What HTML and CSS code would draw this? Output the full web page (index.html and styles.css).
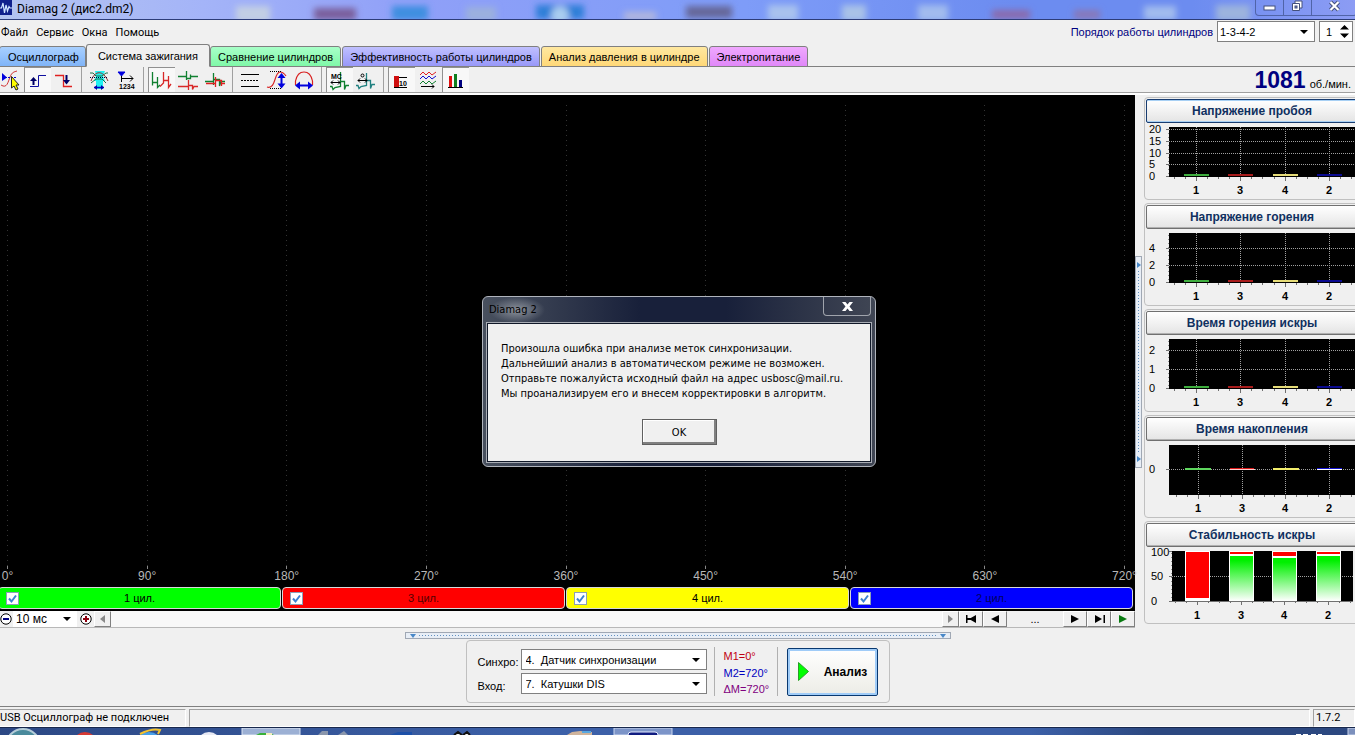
FILE: index.html
```html
<!DOCTYPE html>
<html lang="ru">
<head>
<meta charset="utf-8">
<title>Diamag 2 (дис2.dm2)</title>
<link rel="stylesheet" href="styles.css">
</head>
<body>
<svg class="defs" aria-hidden="true">
  <defs>
    <linearGradient id="good" x1="0" y1="0" x2="0" y2="1"><stop offset="0.1" stop-color="#00f000"/><stop offset="1" stop-color="#fff"/></linearGradient>
    <filter id="soft" x="-20%" y="-60%" width="140%" height="220%"><feGaussianBlur stdDeviation="3"/></filter>
    <symbol id="axis" overflow="visible">
      <rect x="23" y="3" width="190" height="50" fill="#000"/>
      <path d="M50.500 3V53M94.500 3V53M139.500 3V53M183.500 3V53" class="grid"/>
      <path d="M20 52.500H23M50.500 53V57M94.500 53V57M139.500 53V57M183.500 53V57M28.500 53V55M39.500 53V55M61.500 53V55M72.500 53V55M83.500 53V55M105.500 53V55M116.500 53V55M128.500 53V55M150.500 53V55M161.500 53V55M172.500 53V55M194.500 53V55M205.500 53V55" class="tick"/>
      <path d="M22.500 5V53" class="minor"/>
      <rect x="38" y="50" width="25" height="2" fill="#3fae3f"/>
      <rect x="82" y="50" width="25" height="2" fill="#a81c1c"/>
      <rect x="127" y="50" width="25" height="2" fill="#e6dc78"/>
      <rect x="171" y="50" width="25" height="2" fill="#0a0a90"/>
      <g class="cat"><text x="50" y="70">1</text><text x="94" y="70">3</text><text x="139" y="70">4</text><text x="183" y="70">2</text></g>
    </symbol>
    <symbol id="check" viewBox="0 0 13 13"><path d="M3 6.500L5.500 9.500L10 3.500" fill="none" stroke="#3c82d2" stroke-width="2"/></symbol>
  </defs>
</svg>

<header class="titlebar">
  <svg class="blobs" width="100%" height="19" aria-hidden="true">
    <g filter="url(#soft)">
      <rect x="236" y="6" width="34" height="16" fill="#c3cfe4"/>
      <rect x="314" y="8" width="42" height="12" fill="#7a5f9c"/>
      <rect x="392" y="6" width="36" height="14" fill="#3c8fe0"/>
      <rect x="466" y="7" width="30" height="14" fill="#9bb0de"/>
      <rect x="536" y="5" width="48" height="14" fill="#2f7fd8"/>
      <circle cx="560" cy="15" r="9" fill="#a9cdf0"/>
      <rect x="624" y="12" width="32" height="8" fill="#b4b8dc"/>
      <rect x="686" y="6" width="46" height="12" fill="#66689a"/>
      <rect x="768" y="5" width="30" height="16" fill="#a9c2ee"/>
      <rect x="842" y="5" width="24" height="16" fill="#a9c2e8"/>
      <rect x="918" y="5" width="30" height="16" fill="#a2bcee"/>
      <rect x="992" y="10" width="38" height="9" fill="#8a6aac"/>
      <rect x="1074" y="10" width="26" height="9" fill="#8878b8"/>
      <rect x="1144" y="6" width="32" height="14" fill="#a2bcee"/>
      <rect x="1216" y="5" width="34" height="16" fill="#9cb4de"/>
    </g>
  </svg>
  <svg width="12" height="16" viewBox="0 0 12 16" class="appicon" aria-hidden="true"><rect width="12" height="15" fill="#10208c"/><path d="M0 8H1.500L3 3L4.500 13L6 5L7.500 11L9 6.500L10 8H12" fill="none" stroke="#cfe4ff" stroke-width="1.200"/></svg>
  <h1 class="title">Diamag 2 (дис2.dm2)</h1>
  <div class="winbtns">
    <button aria-label="Свернуть"><svg width="13" height="12" viewBox="0 0 13 12"><rect x="1" y="6" width="11" height="4" fill="#fff" stroke="#44507c"/></svg></button>
    <button aria-label="Восстановить"><svg width="13" height="12" viewBox="0 0 13 12"><path d="M4 1H11V8H4Z" fill="#fff" stroke="#44507c"/><path d="M1.500 3.500H8.500V10.500H1.500Z" fill="#fff" stroke="#44507c"/><rect x="4" y="6" width="2" height="2" fill="#6c86cc" stroke="#44507c"/></svg></button>
    <button aria-label="Закрыть" class="wide"><svg width="13" height="12" viewBox="0 0 13 12"><path d="M2.500 2L10.500 10M10.500 2L2.500 10" stroke="#44507c" stroke-width="4"/><path d="M2.500 2L10.500 10M10.500 2L2.500 10" stroke="#fff" stroke-width="2.200"/></svg></button>
  </div>
</header>

<div class="top">
  <div class="topleft">
    <nav class="menu"><button>Файл</button><button>Сервис</button><button>Окна</button><button>Помощь</button></nav>
    <div class="tabs" role="tablist">
      <button role="tab" class="tab t1">Осциллограф</button>
      <button role="tab" class="tab active" aria-selected="true">Система зажигания</button>
      <button role="tab" class="tab t3">Сравнение цилиндров</button>
      <button role="tab" class="tab t4">Эффективность работы цилиндров</button>
      <button role="tab" class="tab t5">Анализ давления в цилиндре</button>
      <button role="tab" class="tab t6">Электропитание</button>
    </div>
  </div>
  <div class="order">
    <label for="order">Порядок работы цилиндров</label>
    <span class="combo orderbox"><select id="order"><option>1-3-4-2</option></select></span>
    <span class="spin"><input aria-label="Номер цилиндра" value="1"><svg width="9" height="13" viewBox="0 0 9 13" aria-hidden="true"><path d="M0 4.500L4.500 0L9 4.500ZM0 8.500H9L4.500 13Z"/></svg></span>
  </div>
</div>

<div class="toolbar">
  <button class="tb first" aria-label="Маркер"><svg width="24" height="24" viewBox="0 0 24 24"><path d="M1 17C7 21 8 14 10 9S14 4 17 3" fill="none" stroke="#d03030"/><path d="M5 9.500H17" stroke="#00c" stroke-dasharray="2 1"/><path d="M2 5L7 9.500L2 13Z" fill="#00d"/><path d="M11.500 8.500V20L14 18L16 22L18 21L16 17H19Z" fill="#ff0" stroke="#222"/></svg></button>
  <button class="tb on" aria-label="Фронт"><svg width="26" height="24" viewBox="0 0 26 24"><path d="M6 18.500H14.500V7.500H22" fill="none" stroke="#1010a0"/><path d="M9.500 17V11" stroke="#006" stroke-width="2"/><path d="M6 13L9.500 9L13 13Z" fill="#006"/></svg></button>
  <button class="tb" aria-label="Спад"><svg width="26" height="24" viewBox="0 0 26 24"><path d="M4 7.500H12.500V18.500H21" fill="none" stroke="#e02020" stroke-width="1.300"/><path d="M15.500 7V14" stroke="#006" stroke-width="2"/><path d="M12 12L15.500 16.500L19 12Z" fill="#006"/></svg></button>
  <i class="sep"></i>
  <button class="tb" aria-label="Диапазон"><svg width="26" height="24" viewBox="0 0 26 24"><path d="M9 3H19L17 8L19 13H17V21H10V13H8L10 8Z" fill="#20f0f0"/><path d="M4 5H7L10 8H16L20 5H22M5 15L10 11H16L20 15" fill="none" stroke="#187048"/><path d="M5 13C9 2 17 2 22 13" fill="none" stroke="#903030"/><path d="M4 9.500H22" stroke="#003" stroke-dasharray="1 1"/><path d="M8 19.500H18" stroke="#00c" stroke-width="1.500"/><path d="M8 19.500L11 17V22ZM18 19.500L15 17V22Z" fill="#00a"/></svg></button>
  <button class="tb" aria-label="Нумерация"><svg width="26" height="24" viewBox="0 0 26 24"><path d="M5 4H12L8.500 8Z" fill="#00d" stroke="#00d"/><path d="M8.500 8V14M8 10.500H20M17 7.500L20 10.500L17 13.500" fill="none" stroke="#000"/><text x="6" y="21" class="num">1234</text></svg></button>
  <i class="sep"></i>
  <button class="tb on" aria-label="Последовательно"><svg width="26" height="24" viewBox="0 0 26 24"><path d="M4.500 17.500V4M4.500 14.500H9.500M9.500 9V19.500L12 17" fill="none" stroke="#108030" stroke-width="1.300"/><path d="M12 18.500L15.500 15V4V12.500H20.500M20.500 8V19.500L23 16" fill="none" stroke="#d82828" stroke-width="1.300"/></svg></button>
  <button class="tb" aria-label="Раздельно"><svg width="26" height="24" viewBox="0 0 26 24"><path d="M3 8.500H11.500M11.500 3V12M11.500 10.500H15.500V6.500M15.500 8.500H23" fill="none" stroke="#108030" stroke-width="1.300"/><path d="M3 18.500H13.500M13.500 12V22M13.500 17.500H17.500V21.500L19 18.500H23" fill="none" stroke="#d82828" stroke-width="1.300"/></svg></button>
  <button class="tb" aria-label="Наложение"><svg width="26" height="24" viewBox="0 0 26 24"><path d="M3 13.500H11.500M11.500 5V17M11.500 11.500H17.500V18L19 13.500H23" fill="none" stroke="#108030" stroke-width="1.300"/><path d="M4 15.500H13.500M13.500 9V19M13.500 12.500H19.500V18M19.500 15.500H23" fill="none" stroke="#e02020" stroke-width="1.300"/></svg></button>
  <i class="sep"></i>
  <button class="tb" aria-label="Линии"><svg width="26" height="24" viewBox="0 0 26 24"><path d="M4 6.500H22M4 18.500H22" stroke="#000"/><path d="M4 12.500H22" stroke="#000" stroke-dasharray="2 1"/></svg></button>
  <button class="tb" aria-label="Амплитуда"><svg width="26" height="24" viewBox="0 0 26 24"><path d="M3 19C12 22 10 4 16 4C19 4 20 5 22 8" fill="none" stroke="#d82020" stroke-width="1.200"/><path d="M6 3.500H18M6 20.500H18" stroke="#000" stroke-dasharray="1 1"/><path d="M17.500 8V17" stroke="#00d" stroke-width="2"/><path d="M13.500 10L17.500 5L21.500 10ZM13.500 15.500L17.500 20.500L21.500 15.500Z" fill="#00d"/></svg></button>
  <button class="tb" aria-label="Длительность"><svg width="26" height="24" viewBox="0 0 26 24"><path d="M4.500 17V13C7 1 19 1 21.500 13V17" fill="none" stroke="#d82020" stroke-width="1.200"/><path d="M8 17.500H18" stroke="#00d" stroke-width="2"/><path d="M9 13.500L4 17.500L9 21.500ZM17 13.500L22 17.500L17 21.500Z" fill="#00d"/></svg></button>
  <i class="sep"></i>
  <button class="tb on" aria-label="Миллисекунды"><svg width="26" height="24" viewBox="0 0 26 24"><path d="M4 18.500H6L7 21.500L9 19.500L14.500 18.500V4V13.500H18.500V21.500L20 17.500H23" fill="none" stroke="#108030" stroke-width="1.300"/><text x="5" y="11" class="num">MC</text><path d="M5 14.500H14M7 12.500L5 14.500L7 16.500M12 12.500L14 14.500L12 16.500" fill="none" stroke="#000"/></svg></button>
  <button class="tb" aria-label="Градусы"><svg width="26" height="24" viewBox="0 0 26 24"><path d="M3 17.500H5L6 20.500L8 18.500L13.500 17.500V5V12.500H17.500V20.500L19 16.500H22" fill="none" stroke="#208080" stroke-width="1.300"/><circle cx="9.500" cy="7.500" r="1.500" fill="none" stroke="#000"/><path d="M5 12.500H14M7 10.500L5 12.500L7 14.500M12 10.500L14 12.500L12 14.500" fill="none" stroke="#000"/></svg></button>
  <i class="sep"></i>
  <button class="tb on" aria-label="Значения"><svg width="26" height="24" viewBox="0 0 26 24"><rect x="6" y="8" width="5" height="11" fill="#d01010"/><path d="M6 19.500H19M11 9.500H19" stroke="#000"/><text x="11" y="18" class="num">10</text></svg></button>
  <button class="tb" aria-label="Тренды"><svg width="26" height="24" viewBox="0 0 26 24"><g fill="none"><path d="M5 7L8 4L11 7L14 4L17 7L21 4" stroke="#e02020"/><path d="M5 11L8 8L11 11L14 8L17 11L21 8" stroke="#1010d0"/><path d="M5 16L8 13L11 16L14 13L17 16L21 13" stroke="#108030"/><path d="M6 18.500H19M17 16.500L19 18.500L17 20.500" stroke="#000"/></g></svg></button>
  <button class="tb on" aria-label="Гистограммы"><svg width="26" height="24" viewBox="0 0 26 24"><rect x="7" y="8" width="3" height="11" fill="#e01010"/><rect x="12" y="6" width="3" height="13" fill="#108020"/><rect x="17" y="12" width="3" height="7" fill="#000080"/><path d="M6 19.500H21" stroke="#000"/></svg></button>
  <div class="rpm"><strong>1081</strong><span>об./мин.</span></div>
</div>

<main class="main">
  <section class="scope">
    <div class="plot">
      <div class="mark"><i></i><span>0°</span></div><div class="mark"><i></i><span>90°</span></div><div class="mark"><i></i><span>180°</span></div><div class="mark"><i></i><span>270°</span></div><div class="mark"><i></i><span>360°</span></div><div class="mark"><i></i><span>450°</span></div><div class="mark"><i></i><span>540°</span></div><div class="mark"><i></i><span>630°</span></div><div class="mark"><i></i><span>720°</span></div>
    </div>
    <div class="cyls">
      <label class="cyl c1"><input type="checkbox" checked><svg class="tick-ico" width="13" height="13"><use href="#check"/></svg><span>1 цил.</span></label>
      <label class="cyl c3"><input type="checkbox" checked><svg class="tick-ico" width="13" height="13"><use href="#check"/></svg><span>3 цил.</span></label>
      <label class="cyl c4"><input type="checkbox" checked><svg class="tick-ico" width="13" height="13"><use href="#check"/></svg><span>4 цил.</span></label>
      <label class="cyl c2"><input type="checkbox" checked><svg class="tick-ico" width="13" height="13"><use href="#check"/></svg><span>2 цил.</span></label>
    </div>
    <div class="scroll">
      <button class="zoomout" aria-label="Уменьшить"><svg width="12" height="12" viewBox="0 0 12 12"><circle cx="6" cy="6" r="5.200" fill="#fff" stroke="#000"/><path d="M3 6H9" stroke="#000080" stroke-width="2"/></svg></button>
      <span class="combo timebox"><select aria-label="Развёртка"><option>10 мс</option></select></span>
      <button class="zoomin" aria-label="Увеличить"><svg width="12" height="12" viewBox="0 0 12 12"><circle cx="6" cy="6" r="5.200" fill="#fff" stroke="#000"/><path d="M3 6H9M6 3V9" stroke="#900010" stroke-width="2"/></svg></button>
      <button class="raised arrow" aria-label="Влево"><svg width="5" height="8" viewBox="0 0 5 8"><path d="M5 0V8L0 4Z" fill="#888"/></svg></button>
      <div class="track"></div>
      <button class="raised arrow" aria-label="Вправо"><svg width="5" height="8" viewBox="0 0 5 8"><path d="M0 0V8L5 4Z" fill="#888"/></svg></button>
      <button class="raised nav" aria-label="В начало"><svg width="11" height="8" viewBox="0 0 11 8"><path d="M0 0H1.500V8H0ZM10 0V8L3 4ZM1 3H5V5H1Z"/></svg></button>
      <button class="raised nav" aria-label="Назад"><svg width="8" height="8" viewBox="0 0 8 8"><path d="M8 0V8L0 4Z"/></svg></button>
      <button class="dots">...</button>
      <button class="raised nav" aria-label="Вперёд"><svg width="8" height="8" viewBox="0 0 8 8"><path d="M0 0V8L8 4Z"/></svg></button>
      <button class="raised nav" aria-label="В конец"><svg width="11" height="8" viewBox="0 0 11 8"><path d="M9.500 0H11V8H9.500ZM1 0V8L8 4Z"/></svg></button>
      <button class="raised nav" aria-label="Пуск"><svg width="8" height="8" viewBox="0 0 8 8"><path d="M0 0V8L8 4Z" fill="#087a10"/></svg></button>
    </div>
  </section>

  <div class="vsplit"><svg width="4" height="6" viewBox="0 0 4 6"><path d="M0 0V6L4 3Z"/></svg><i></i><svg width="4" height="6" viewBox="0 0 4 6"><path d="M0 0V6L4 3Z"/></svg></div>

  <aside class="side">
    <section class="panel"><button class="head focus">Напряжение пробоя</button>
      <svg class="chart" height="74"><use href="#axis"/><path d="M23 5.500H213M23 17.500H213M23 29.500H213M23 40.500H213" class="grid"/><path d="M20 5.500H23M20 17.500H23M20 29.500H23M20 40.500H23" class="tick"/><g class="val"><text x="3" y="9">20</text><text x="3" y="21">15</text><text x="3" y="33">10</text><text x="3" y="44">5</text><text x="3" y="56">0</text></g></svg></section>
    <section class="panel"><button class="head">Напряжение горения</button>
      <svg class="chart" height="74"><use href="#axis"/><path d="M23 18.500H213M23 35.500H213" class="grid"/><path d="M20 18.500H23M20 35.500H23" class="tick"/><g class="val"><text x="3" y="22">4</text><text x="3" y="39">2</text><text x="3" y="56">0</text></g></svg></section>
    <section class="panel"><button class="head">Время горения искры</button>
      <svg class="chart" height="74"><use href="#axis"/><path d="M23 14.500H213M23 33.500H213" class="grid"/><path d="M20 14.500H23M20 33.500H23" class="tick"/><g class="val"><text x="3" y="18">2</text><text x="3" y="37">1</text><text x="3" y="56">0</text></g></svg></section>
    <section class="panel"><button class="head">Время накопления</button>
      <svg class="chart" height="74"><rect x="23" y="3" width="190" height="50" fill="#000"/><path d="M52.500 3V53M96.500 3V53M139.500 3V53M183.500 3V53M23 27.500H213" class="grid"/><path d="M20 27.500H23M52.500 53V57M96.500 53V57M139.500 53V57M183.500 53V57M30.500 53V55M41.500 53V55M63.500 53V55M74.500 53V55M85.500 53V55M107.500 53V55M118.500 53V55M128.500 53V55M150.500 53V55M161.500 53V55M172.500 53V55M194.500 53V55M205.500 53V55" class="tick"/>
      <rect x="39" y="26" width="26" height="2" fill="#5ed65e"/><rect x="84" y="26" width="24" height="1" fill="#d81818"/><rect x="84" y="27" width="25" height="1" fill="#fcc"/><rect x="127" y="26" width="26" height="2" fill="#f2ee6c"/><rect x="171" y="26" width="25" height="1" fill="#1414d0"/><rect x="171" y="27" width="25" height="1" fill="#fff"/>
      <g class="val"><text x="3" y="31">0</text></g><g class="cat"><text x="52" y="70">1</text><text x="96" y="70">3</text><text x="139" y="70">4</text><text x="183" y="70">2</text></g></svg></section>
    <section class="panel"><button class="head">Стабильность искры</button>
      <svg class="chart" height="74"><rect x="26" y="3" width="181" height="50" fill="#000"/><path d="M26 28.500H207" class="grid"/><path d="M23 3.500H26M23 28.500H26M23 53.500H207M51.500 53V57M95.500 53V57M138.500 53V57M182.500 53V57M29.500 53V55M40.500 53V55M62.500 53V55M73.500 53V55M84.500 53V55M106.500 53V55M117.500 53V55M127.500 53V55M149.500 53V55M160.500 53V55M171.500 53V55M193.500 53V55M204.500 53V55" class="tick"/><path d="M25.500 5V53" class="minor"/>
      <rect x="39" y="3" width="25" height="50" fill="#fff"/><rect x="40" y="4" width="23" height="46" fill="#f00"/>
      <rect x="83" y="3" width="25" height="50" fill="#fff"/><rect x="84" y="4" width="23" height="2" fill="#f00"/><rect x="84" y="8" width="23" height="45" fill="url(#good)"/>
      <rect x="126" y="3" width="25" height="50" fill="#fff"/><rect x="127" y="4" width="23" height="4" fill="#f00"/><rect x="127" y="10" width="23" height="43" fill="url(#good)"/>
      <rect x="170" y="3" width="25" height="50" fill="#fff"/><rect x="171" y="4" width="23" height="2" fill="#f00"/><rect x="171" y="8" width="23" height="45" fill="url(#good)"/>
      <g class="val"><text x="5" y="8">100</text><text x="5" y="32">50</text><text x="5" y="57">0</text></g><g class="cat"><text x="51" y="71">1</text><text x="95" y="71">3</text><text x="138" y="71">4</text><text x="182" y="71">2</text></g></svg></section>
  </aside>
</main>

<div class="bottom">
  <div class="hsplit"><svg width="6" height="4" viewBox="0 0 6 4"><path d="M0 0H6L3 4Z"/></svg><i></i><svg width="6" height="4" viewBox="0 0 6 4"><path d="M0 0H6L3 4Z"/></svg></div>
  <div class="controls">
    <div class="fields">
      <label for="sync">Синхро:</label><span class="combo"><select id="sync"><option>4.&nbsp; Датчик синхронизации</option></select></span>
      <label for="input">Вход:</label><span class="combo"><select id="input"><option>7.&nbsp; Катушки DIS</option></select></span>
    </div>
    <div class="marks"><span class="m1">М1=0°</span><span class="m2">М2=720°</span><span class="dm">ΔМ=720°</span></div>
    <button class="analyze"><svg width="11" height="19" viewBox="0 0 11 19"><path d="M0.500 0.500V18.500L10.500 9.500Z" fill="#0f0" stroke="#28a028"/></svg><span>Анализ</span></button>
  </div>
</div>

<footer class="status"><span class="s1">USB Осциллограф не подключен</span><span class="s2"></span><span class="s3">1.7.2</span></footer>

<div class="taskbar">
  <svg width="100%" height="7" aria-hidden="true">
    <circle cx="23" cy="18" r="17" fill="#4a8a9c" stroke="#b4ccd8" stroke-width="2"/>
    <circle cx="85" cy="16" r="12" fill="#d83a34"/>
    <circle cx="149" cy="18" r="12" fill="none" stroke="#48a0e8" stroke-width="4"/><path d="M140 6Q152 0 160 2L158 6" fill="none" stroke="#f4c430" stroke-width="2"/>
    <circle cx="209" cy="16" r="12" fill="#e8eaf4"/>
    <rect x="242" y="0" width="58" height="7" fill="#9cb0d4" stroke="#dde6f4"/><path d="M256 7L260 5H270L274 7Z" fill="#38b038"/><rect x="266" y="5" width="6" height="2" fill="#f4f0c0"/>
    <path d="M318 7L322 3H328V7ZM338 7L344 3L348 7Z" fill="#8a96ac"/>
    <path d="M390 7L398 4H412V7Z" fill="#1c50a8"/>
    <path d="M454 7L458 4L462 7M463 7L467 4L470 7" stroke="#111" fill="#eee" stroke-width="2"/>
    <path d="M567 7L572 4L580 3L592 4V7Z" fill="#d0b49c"/><rect x="582" y="3" width="9" height="2" fill="#58a8e0"/>
    <rect x="614" y="0" width="58" height="7" fill="#7c94c8" stroke="#ccd8f0"/><rect x="628" y="4" width="30" height="8" rx="3" fill="#101c80" stroke="#e4ecff"/>
    <path d="M1296 6.500H1308M1311 6.500H1322" stroke="#fff" stroke-dasharray="5 2"/>
    <rect x="1348" y="0" width="10" height="7" fill="#7c90bc" stroke="#c8d4ec"/>
  </svg>
</div>

<div class="dialog" role="dialog" aria-label="Diamag 2">
  <div class="dtitle"><span>Diamag 2</span><button class="dclose" aria-label="Закрыть"><svg width="11" height="9" viewBox="0 0 11 9"><path d="M0 0H3.500L5.500 2.500L7.500 0H11L7.500 4.500L11 9H7.500L5.500 6.500L3.500 9H0L3.500 4.500Z" fill="#fff"/></svg></button></div>
  <div class="dbody">
    <p>Произошла ошибка при анализе меток синхронизации.<br>Дальнейший анализ в автоматическом режиме не возможен.<br>Отправьте пожалуйста исходный файл на адрес usbosc@mail.ru.<br>Мы проанализируем его и внесем корректировки в алгоритм.</p>
    <button class="ok">OK</button>
  </div>
</div>
</body>
</html>
```
FILE: styles.css
```css
* { box-sizing: border-box; }
body { margin: 0; height: 100vh; display: flex; flex-direction: column; overflow: hidden; background: #f0f0f0; color: #000; font: 11px/14px "Liberation Sans", Arial, sans-serif; }
button, input, select { font: inherit; color: inherit; margin: 0; padding: 0; border: 0; background: none; border-radius: 0; }
svg { display: block; flex: none; }
.defs { position: absolute; width: 0; height: 0; }

.titlebar { position: relative; flex: none; height: 20px; display: flex; align-items: flex-start; gap: 5px; border-bottom: 1px solid #2c3c78; background: linear-gradient(90deg, #b4c4f0 0, #a4b4f8 15%, #90a0f8 30%, #7e9cf8 55%, #6c8cf0 75%, #6c8cf0 88%, #8c9cf4 100%); }
.blobs { position: absolute; inset: 0; }
.appicon, .title, .winbtns { position: relative; }
.title { margin: 0; flex: 1; font: 12px/18px Roboto, sans-serif; }
.winbtns { display: flex; height: 16px; margin-right: -2px; border: 1px solid #5064a8; border-top: 0; border-radius: 0 0 4px 4px; }
.winbtns button { width: 28px; display: flex; justify-content: center; border-right: 1px solid #5064a8; }
.winbtns .wide { width: 44px; border: 0; }

.top { flex: none; display: flex; justify-content: space-between; height: 47px; border-bottom: 1px solid #808080; }
.topleft { display: flex; flex-direction: column; justify-content: space-between; }
.menu { display: flex; gap: 8px; padding: 5px 0 0 1px; font: 11px/16px Roboto, sans-serif; }
.tabs { display: flex; align-items: flex-end; gap: 1px; margin-bottom: -1px; }
.tab { height: 21px; padding: 0 7px; white-space: nowrap; border: 1px solid #808080; border-radius: 3px 3px 0 0; }
.t1 { margin-left: -1px; padding: 0 6px 0 8px; background: linear-gradient(#a8d0ff, #80b4f8); }
.tab.active { height: 23px; padding: 0 11px; background: #f0f0f0; border-bottom-color: #f0f0f0; margin: 0 -1px; }
.t3 { background: linear-gradient(#a8ffc8, #80f8a8); }
.t4 { background: linear-gradient(#c0c0ff, #9898f8); }
.t5 { background: linear-gradient(#ffe8a0, #ffd878); }
.t6 { background: linear-gradient(#f0a8ff, #e088f8); }
.order { display: flex; align-items: flex-start; gap: 4px; padding: 1px 2px 0 0; color: #000080; }
.order label { line-height: 22px; }

.combo { position: relative; display: flex; background: #fff; border: 1px solid #808080; color: #000; }
.combo select { appearance: none; width: 100%; padding: 0 22px 0 4px; }
.combo::after { content: ""; position: absolute; right: 6px; top: 50%; margin-top: -2px; border: 4px solid transparent; border-top-color: #000; border-bottom: 0; pointer-events: none; }
.orderbox { width: 98px; height: 21px; }
.orderbox select { padding-left: 2px; }
.spin { display: flex; align-items: center; width: 34px; height: 21px; background: #fff; border: 1px solid #808080; color: #000; }
.spin input { width: 20px; padding-left: 6px; }

.toolbar { flex: none; display: flex; height: 28px; border-bottom: 2px solid #fff; box-shadow: inset 0 -1px #a0a0a0; }
.tb { width: 27px; height: 25px; padding: 1px 0 0 0; }
.tb.first { width: 24px; }
.tb.on { background: #f8f8f8; box-shadow: inset 1px 1px #909090; }
.sep { width: 8px; height: 25px; background: linear-gradient(#a0a0a0, #a0a0a0) 3px 0 / 1px 100% no-repeat; }
.num { font: bold 7px/7px "Liberation Sans", sans-serif; }
.rpm { margin-left: auto; display: flex; align-items: baseline; gap: 4px; padding-right: 4px; line-height: 27px; }
.rpm strong { font-size: 23px; color: #000080; }

.main { flex: 1; min-height: 0; display: flex; }
.scope { flex: 1; min-width: 0; display: flex; flex-direction: column; background: #000; }
.plot { flex: 1; display: flex; justify-content: space-between; padding: 10px 10px 4px 7px; color: #b8b8b8; }
.mark { width: 1px; display: flex; flex-direction: column; align-items: center; white-space: nowrap; font-size: 12px; }
.mark i { flex: 1; width: 1px; background: linear-gradient(#888, #888) bottom / 1px 3px no-repeat, repeating-linear-gradient(#333 0 1px, #000 1px 5px); }
.mark span { line-height: 14px; }
.cyls { display: grid; grid-template-columns: repeat(4, 1fr); gap: 1px; padding: 0 2px 2px 0; margin-left: -2px; }
.cyl { position: relative; display: flex; align-items: center; height: 22px; padding-left: 7px; border: 1px solid #d8d8d8; border-radius: 4px; }
.cyl input { appearance: none; width: 13px; height: 13px; background: #fff; border: 1px solid #8ca0b8; }
.tick-ico { margin-left: -13px; pointer-events: none; }
.cyl span { flex: 1; text-align: center; padding-right: 20px; }
.c1 { background: #0f0; }
.c3 { background: #f00; }
.c4 { background: #ff0; }
.c2 { background: #00f; }
.c3 span { color: #500; }
.c2 span { color: #000060; }
.scroll { display: flex; height: 17px; background: #f0f0f0; border-bottom: 1px solid #b8b8b8; }
.scroll button { display: flex; align-items: center; justify-content: center; height: 16px; }
.zoomout { width: 13px; padding-right: 2px; }
.zoomin { width: 17px; }
.timebox { width: 64px; border: 0; }
.timebox select { padding-left: 3px; font-size: 12px; }
.scroll .raised { border: 1px solid #fff; border-right-color: #808080; border-bottom-color: #808080; }
.arrow { width: 17px; }
.nav { width: 24px; }
.track { flex: 1; background: #f8f8f8; }
.dots { width: 56px; }
.vsplit { flex: none; align-self: center; display: flex; flex-direction: column; align-items: center; gap: 3px; width: 7px; height: 212px; padding: 5px 0; border: 1px solid #a0a8b4; background: #e8eef6; fill: #4888c8; }
.vsplit i { flex: 1; width: 1px; background: repeating-linear-gradient(#6090c0 0 1px, transparent 1px 3px); }

.side { flex: none; width: 211px; margin-left: 2px; padding-top: 2px; overflow: hidden; display: flex; flex-direction: column; gap: 3px; }
.panel { width: 216px; height: 103px; padding: 1px; border: 1px solid #c0c0c0; border-radius: 4px; }
.head { display: block; width: 212px; height: 24px; border: 1px solid #707070; border-radius: 2px; background: linear-gradient(#fff, #e4e4e4); box-shadow: inset 0 -1px #b0b0b0; font-weight: bold; font-size: 12px; color: #103060; }
.head.focus { border-color: #183c70; box-shadow: inset 0 1px #a8d0f4, inset 0 -1px #a8d0f4; }
.chart { width: 212px; margin-top: 1px; overflow: visible; }
.grid { stroke: #a0a0a0; stroke-dasharray: 1 1; }
.tick { stroke: #707070; }
.minor { stroke: #909090; stroke-dasharray: 1 3; }
.val { font-size: 11px; }
.cat { font-size: 11px; font-weight: bold; text-anchor: middle; }

.bottom { flex: none; display: flex; flex-direction: column; align-items: center; height: 79px; padding-top: 4px; gap: 1px; border-bottom: 1px solid #808080; }
.hsplit { display: flex; align-items: center; gap: 3px; width: 546px; height: 7px; padding: 0 4px; border: 1px solid #a0a8b4; background: #e8eef6; fill: #4888c8; }
.hsplit i { flex: 1; height: 1px; background: repeating-linear-gradient(90deg, #6090c0 0 1px, transparent 1px 3px); }
.controls { display: flex; align-items: center; width: 424px; height: 63px; padding: 0 11px; border: 1px solid #c0c0c0; border-radius: 4px; }
.fields { display: grid; grid-template-columns: 43px 186px; row-gap: 3px; align-items: center; }
.fields label { padding-top: 4px; }
.fields .combo { height: 21px; }
.marks { display: flex; flex-direction: column; justify-content: space-between; width: 65px; height: 49px; margin-left: 7px; padding: 2px 0 0 9px; border-left: 1px solid #b0b0b0; border-right: 1px solid #b0b0b0; }
.m1 { color: #c00010; }
.m2 { color: #0000c0; }
.dm { color: #800080; }
.analyze { display: flex; align-items: center; gap: 15px; width: 92px; height: 48px; margin-left: 9px; padding-left: 10px; border: 1px solid #083870; border-radius: 2px; background: linear-gradient(#fff, #ecece6); box-shadow: inset 0 0 0 2px #a0ccf8; font-weight: bold; font-size: 12px; }

.status { flex: none; display: flex; gap: 3px; height: 20px; padding-top: 2px; font: 11px/15px Roboto, sans-serif; }
.status span { border: 1px solid #a0a0a0; border-right-color: #fff; border-bottom-color: #fff; }
.status .s1 { width: 186px; white-space: nowrap; border-left: 0; }
.s2 { flex: 1; }
.s3 { width: 42px; padding-left: 2px; }
.taskbar { flex: none; height: 8px; border-top: 1px solid #18284c; background: linear-gradient(90deg, #2c4884, #3c60a8 40%, #3c60a8 76%, #2c4880 85%, #2c4880); }

.dialog { position: absolute; left: 482px; top: 296px; width: 394px; padding: 0 4px 4px; border: 1px solid #b0b4bc; border-radius: 6px; background: linear-gradient(90deg, #48505e, #18203a 40%, #18203a 62%, #404654); font: 11px/15px "DejaVu Sans Condensed", "DejaVu Sans", sans-serif; }
.dtitle { display: flex; justify-content: space-between; height: 26px; padding-left: 2px; line-height: 26px; }
.dtitle span { padding: 0 8px 0 0; background: radial-gradient(closest-side, #8c929c, transparent); }
.dclose { display: flex; align-items: center; justify-content: center; width: 48px; height: 19px; border: 1px solid #a0a4ac; border-top: 0; border-radius: 0 0 4px 4px; }
.dbody { display: flex; flex-direction: column; align-items: center; height: 139px; padding-top: 17px; background: #f0f0f0; border: 1px solid #101828; outline: 1px solid #a8acb4; }
.dbody p { margin: 0 0 18px; width: 100%; padding-left: 13px; white-space: nowrap; }
.ok { width: 75px; height: 26px; border: 1px solid #606060; box-shadow: inset -2px -2px #808080, inset 1px 1px #fff; }
```
